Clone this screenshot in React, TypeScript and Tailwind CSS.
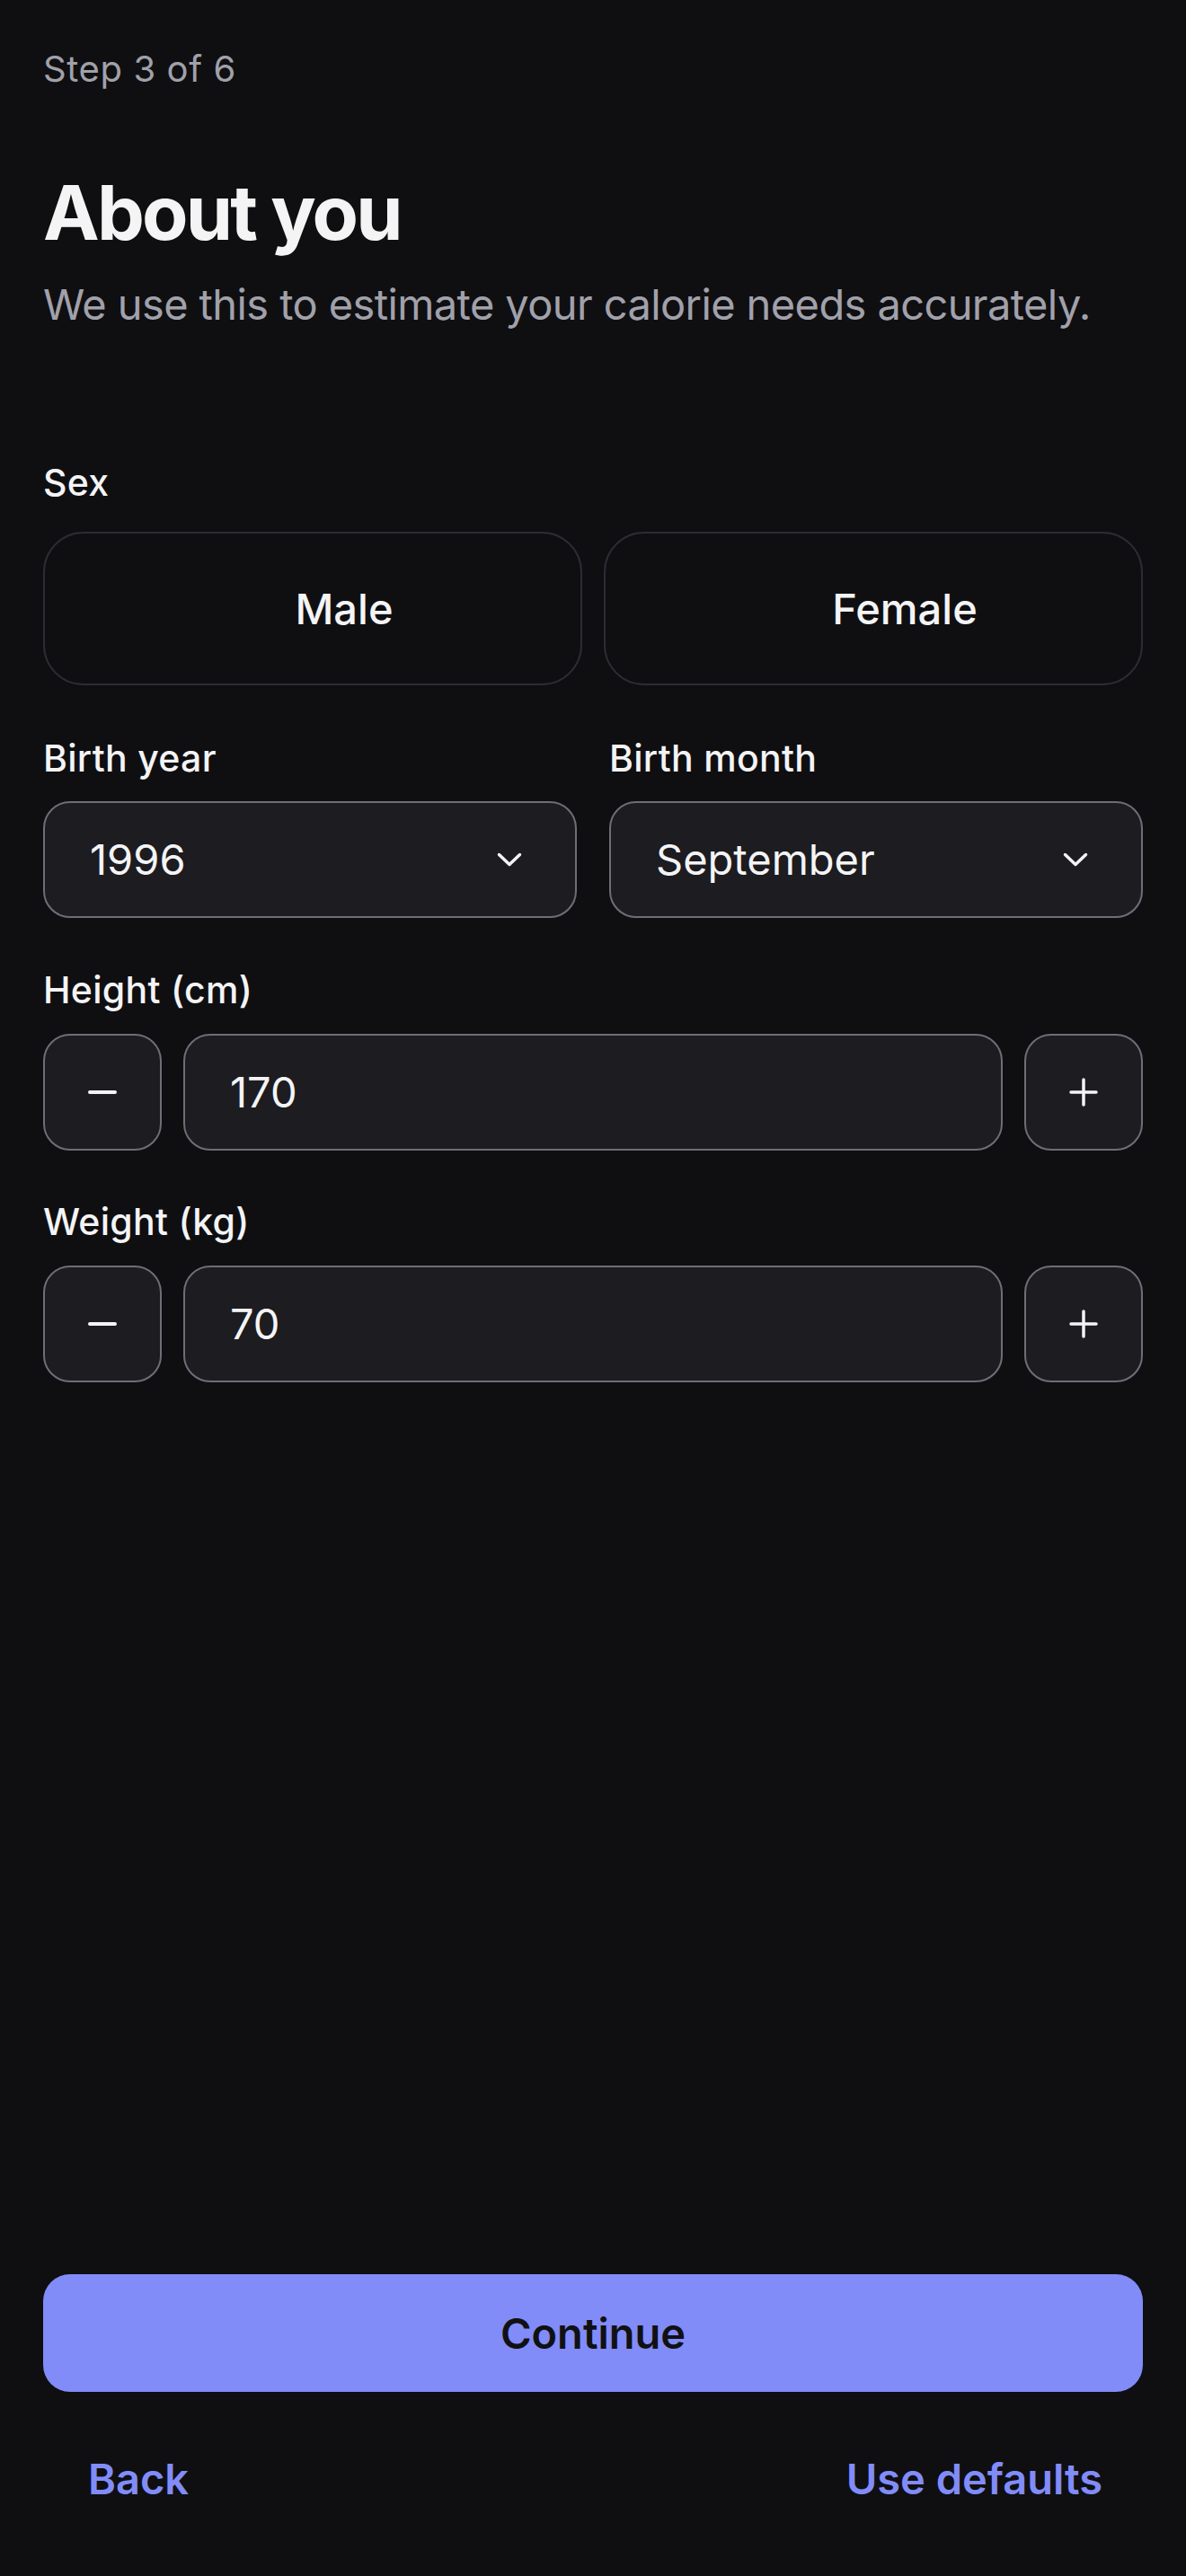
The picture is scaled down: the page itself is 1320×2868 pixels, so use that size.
import { useState } from "react";

/**
 * Onboarding step: basic body info (sex, birth date, height, weight).
 */

const FONT = { fontFamily: "Inter, 'Noto Sans', sans-serif" };

function ChevronDown() {
  return (
    <svg width="28" height="16" viewBox="0 0 28 16" fill="none" className="shrink-0">
      <path d="M2.5 2.5 L14 13.5 L25.5 2.5" stroke="#f4f4f5" strokeWidth="3.5" strokeLinecap="round" strokeLinejoin="round" />
    </svg>
  );
}

function MinusIcon() {
  return (
    <svg width="32" height="32" viewBox="0 0 32 32" fill="none">
      <path d="M2 16 H30" stroke="#f4f4f5" strokeWidth="4" strokeLinecap="round" />
    </svg>
  );
}

function PlusIcon() {
  return (
    <svg width="32" height="32" viewBox="0 0 32 32" fill="none">
      <path d="M2 16 H30 M16 2 V30" stroke="#f4f4f5" strokeWidth="3.5" strokeLinecap="round" />
    </svg>
  );
}

function Label({ children }: { children: string }) {
  return (
    <div className="text-[41px] leading-[48px] font-medium tracking-[0.3px] text-[#f4f4f5]">{children}</div>
  );
}

function SelectBox({ value }: { value: string }) {
  return (
    <div className="flex h-[130px] items-center justify-between rounded-[30px] border-2 border-[#6e6e78] bg-[#1c1c21] pl-[50px] pr-[59px]">
      <span className="text-[47px] leading-[56px] text-[#f4f4f5]">{value}</span>
      <ChevronDown />
    </div>
  );
}

function Stepper({ value, onChange }: { value: number; onChange: (v: number) => void }) {
  return (
    <div className="flex gap-[24px]">
      <button
        onClick={() => onChange(value - 1)}
        className="flex h-[130px] w-[132px] shrink-0 items-center justify-center rounded-[30px] border-2 border-[#6e6e78] bg-[#1c1c21]"
      >
        <MinusIcon />
      </button>
      <div className="flex h-[130px] flex-1 items-center rounded-[30px] border-2 border-[#6e6e78] bg-[#1c1c21] pl-[50px]">
        <span className="text-[47px] leading-[56px] text-[#f4f4f5]">{value}</span>
      </div>
      <button
        onClick={() => onChange(value + 1)}
        className="flex h-[130px] w-[132px] shrink-0 items-center justify-center rounded-[30px] border-2 border-[#6e6e78] bg-[#1c1c21]"
      >
        <PlusIcon />
      </button>
    </div>
  );
}

export default function App() {
  const [sex, setSex] = useState<string | null>(null);
  const [height, setHeight] = useState(170);
  const [weight, setWeight] = useState(70);

  return (
    <div style={FONT} className="flex min-h-[2868px] flex-col bg-[#0f0f12] px-[48px] pt-[53px] pb-[76px]">
      <div className="text-[40px] leading-[48px] tracking-[0.6px] text-[#a1a1aa]">Step 3 of 6</div>

      <h1 className="mt-[88px] text-[84px] leading-[96px] font-bold tracking-[-2.8px] text-[#f4f4f5]">About you</h1>
      <p className="mt-[22px] text-[47px] leading-[64px] tracking-[-0.6px] text-[#a1a1aa]">
        We use this to estimate your calorie needs accurately.
      </p>

      <div className="mt-[142px]">
        <Label>Sex</Label>
        <div className="mt-[31px] grid grid-cols-2 gap-[24px]">
          {["Male", "Female"].map((s) => (
            <button
              key={s}
              onClick={() => setSex(s)}
              className={`flex h-[171px] items-center justify-center rounded-[45px] border-2 pl-[70px] text-[47px] leading-[56px] font-medium text-[#f4f4f5] ${
                sex === s ? "border-[#818cf8] bg-[#1c1c21]" : "border-[#2c2c33] bg-[#0f0f12]"
              }`}
            >
              {s}
            </button>
          ))}
        </div>
      </div>

      <div className="mt-[57px] grid grid-cols-2 gap-[36px]">
        <div>
          <Label>Birth year</Label>
          <div className="mt-[24px]">
            <SelectBox value="1996" />
          </div>
        </div>
        <div>
          <Label>Birth month</Label>
          <div className="mt-[24px]">
            <SelectBox value="September" />
          </div>
        </div>
      </div>

      <div className="mt-[56px]">
        <Label>Height (cm)</Label>
        <div className="mt-[25px]">
          <Stepper value={height} onChange={setHeight} />
        </div>
      </div>

      <div className="mt-[55px]">
        <Label>Weight (kg)</Label>
        <div className="mt-[25px]">
          <Stepper value={weight} onChange={setWeight} />
        </div>
      </div>

      <div className="flex-1" />

      <button className="flex h-[131px] items-center justify-center rounded-[30px] bg-[#818cf8] text-[47px] leading-[56px] font-semibold text-[#111114]">
        Continue
      </button>

      <div className="mt-[65px] flex items-center justify-between pl-[50px] pr-[45px]">
        <button className="text-[47px] leading-[64px] font-semibold text-[#818cf8]">Back</button>
        <button className="text-[47px] leading-[64px] font-semibold text-[#818cf8]">Use defaults</button>
      </div>
    </div>
  );
}
